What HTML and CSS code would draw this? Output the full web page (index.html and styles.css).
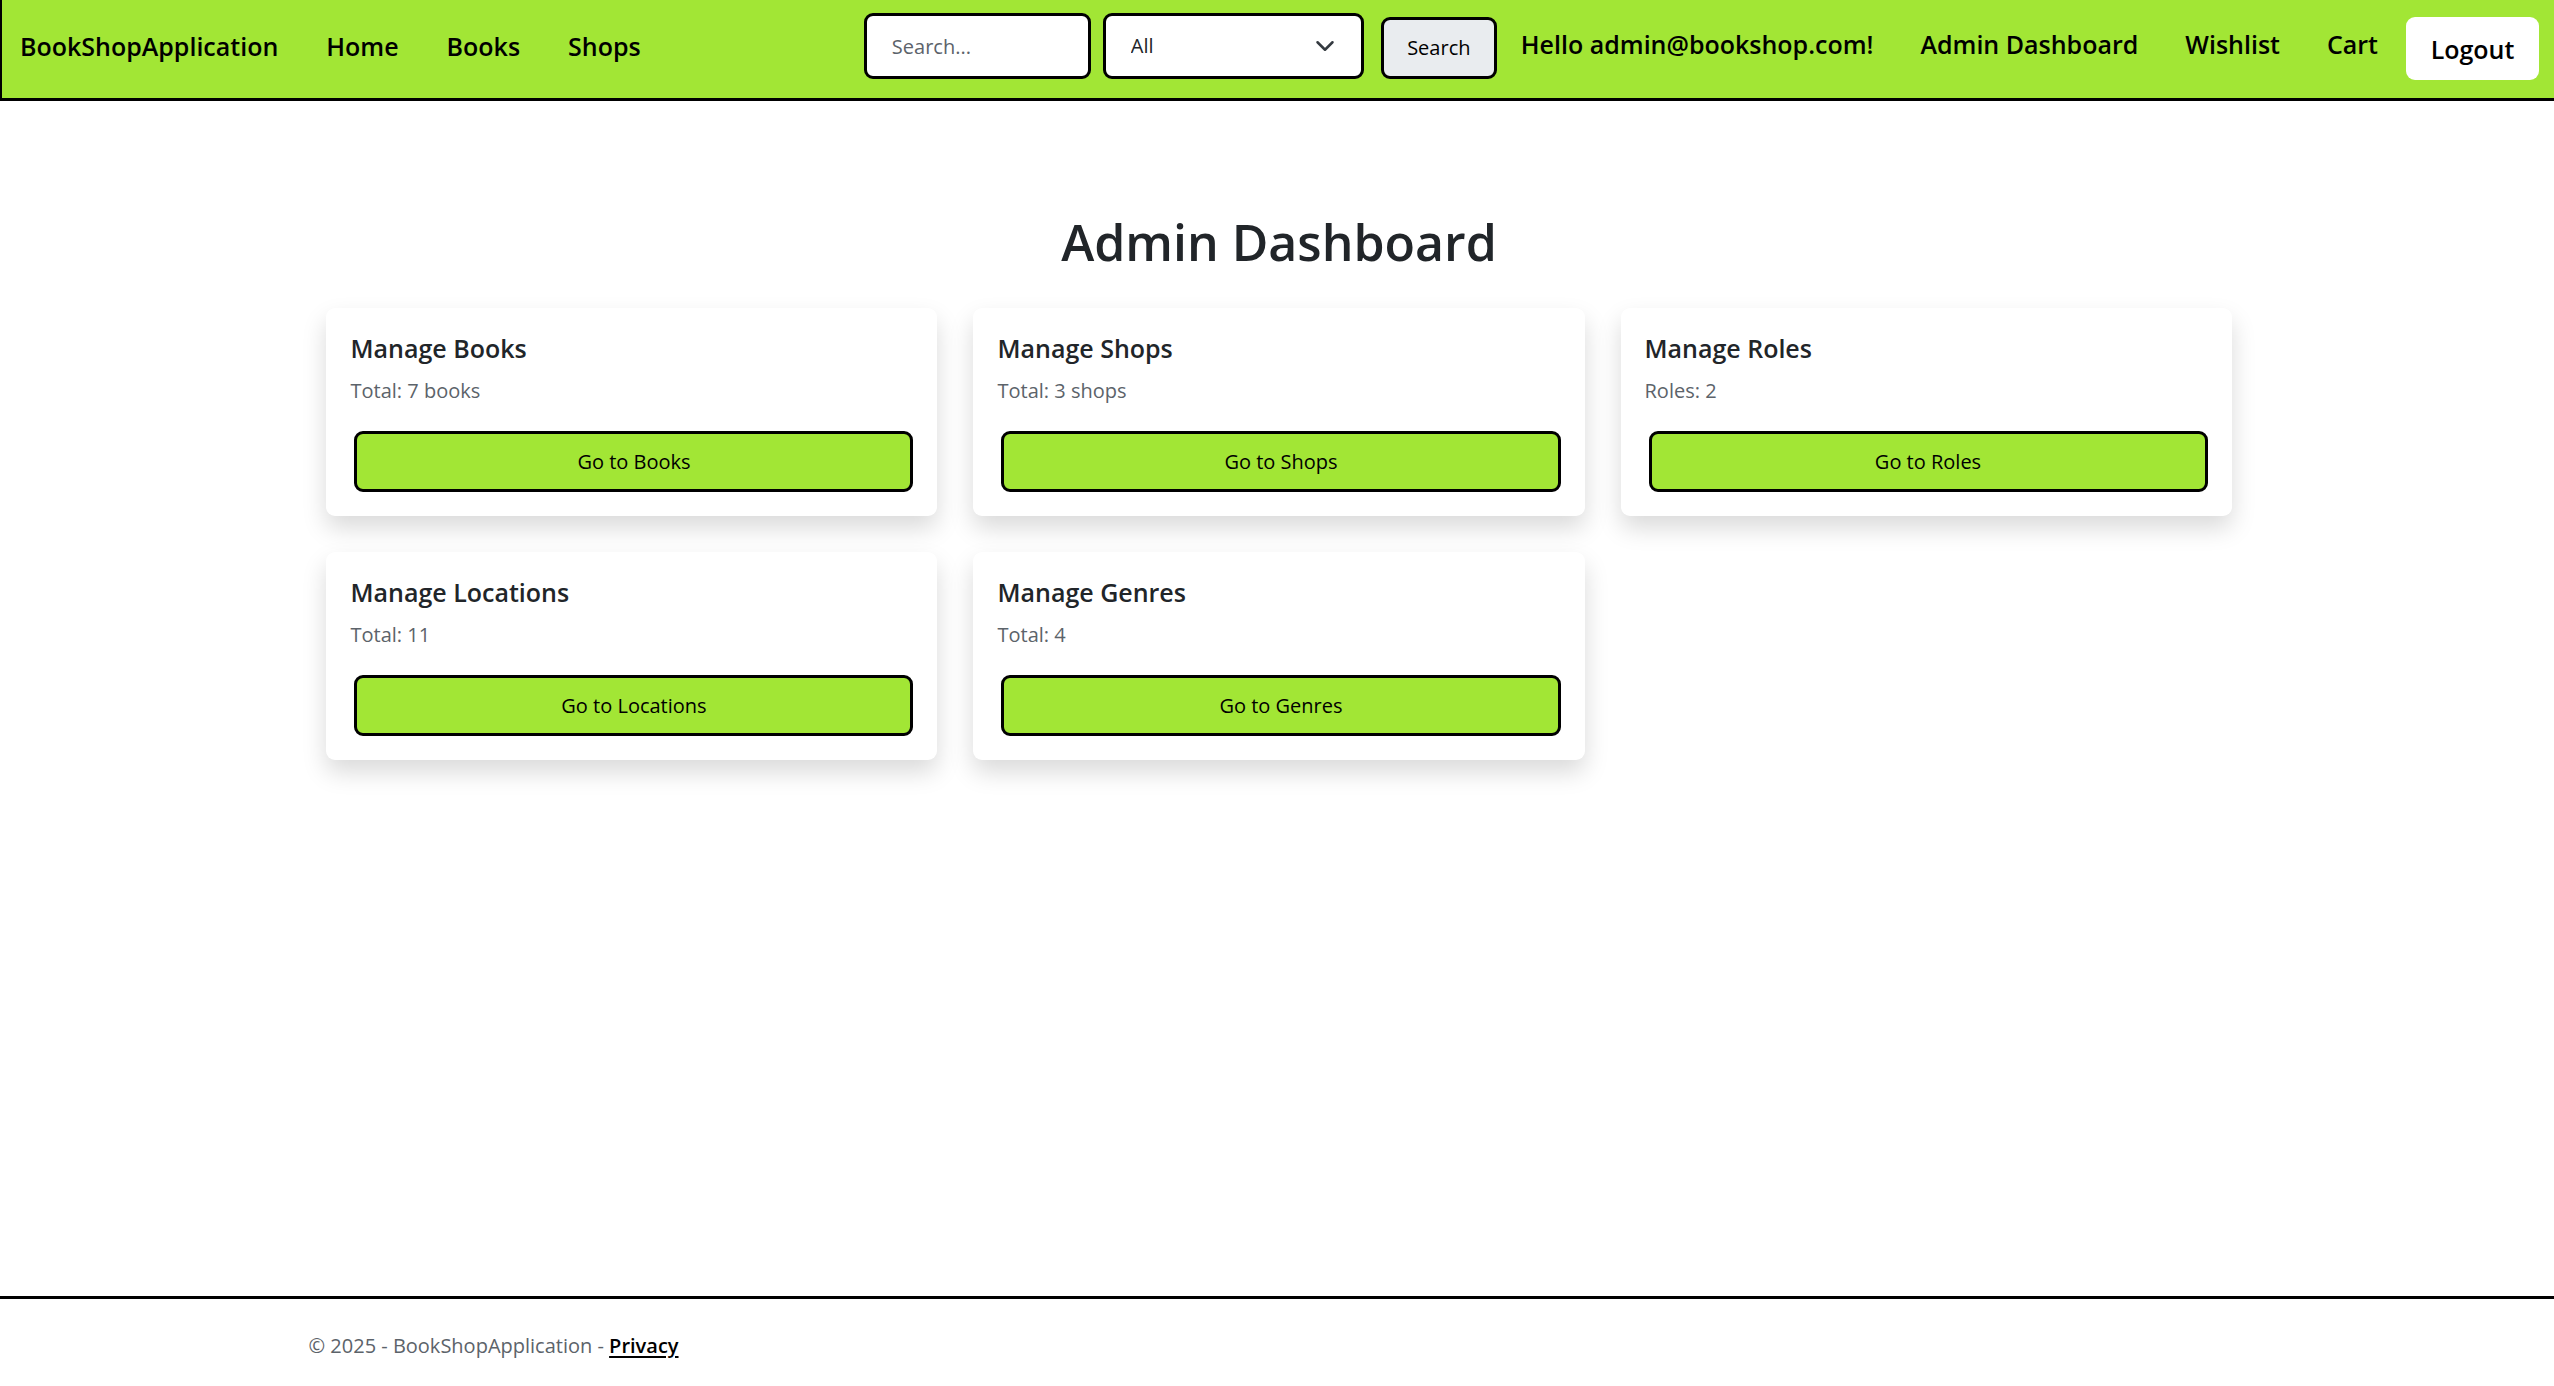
FILE: index.html
```html
<!DOCTYPE html>
<html lang="en">
<head>
<meta charset="utf-8">
<title>Admin Dashboard - BookShopApplication</title>
<link rel="stylesheet" href="styles.css">
</head>
<body>
<header class="navbar">
  <nav class="nav-main" aria-label="Main">
    <a class="nav-link" href="#">BookShopApplication</a>
    <a class="nav-link" href="#">Home</a>
    <a class="nav-link" href="#">Books</a>
    <a class="nav-link" href="#">Shops</a>
  </nav>
  <form class="search">
    <input class="field search-text" type="text" placeholder="Search..." aria-label="Search">
    <select class="field search-type" aria-label="Category"><option>All</option></select>
    <button class="btn btn-search" type="submit">Search</button>
  </form>
  <nav class="nav-user" aria-label="Account">
    <a class="nav-link" href="#">Hello admin@bookshop.com!</a>
    <a class="nav-link" href="#">Admin Dashboard</a>
    <a class="nav-link" href="#">Wishlist</a>
    <a class="nav-link" href="#">Cart</a>
  </nav>
  <button class="btn-logout" type="button">Logout</button>
</header>

<main class="container">
  <h1 class="title">Admin Dashboard</h1>
  <div class="cards">
    <section class="card">
      <h2 class="card-title">Manage Books</h2>
      <p class="card-text">Total: 7 books</p>
      <a class="btn btn-go" href="#">Go to Books</a>
    </section>
    <section class="card">
      <h2 class="card-title">Manage Shops</h2>
      <p class="card-text">Total: 3 shops</p>
      <a class="btn btn-go" href="#">Go to Shops</a>
    </section>
    <section class="card">
      <h2 class="card-title">Manage Roles</h2>
      <p class="card-text">Roles: 2</p>
      <a class="btn btn-go" href="#">Go to Roles</a>
    </section>
    <section class="card">
      <h2 class="card-title">Manage Locations</h2>
      <p class="card-text">Total: 11</p>
      <a class="btn btn-go" href="#">Go to Locations</a>
    </section>
    <section class="card">
      <h2 class="card-title">Manage Genres</h2>
      <p class="card-text">Total: 4</p>
      <a class="btn btn-go" href="#">Go to Genres</a>
    </section>
  </div>
</main>

<footer class="footer">
  <div class="container">© 2025 - BookShopApplication - <a class="privacy" href="#">Privacy</a></div>
</footer>
</body>
</html>
```
FILE: styles.css
```css
* { box-sizing: border-box; }

body {
  margin: 0;
  min-height: 100vh;
  display: flex;
  flex-direction: column;
  background: #fff;
  color: #212529;
  font-family: "Open Sans", "Noto Sans", sans-serif;
  font-size: 20px;
  line-height: 32px;
}

.navbar {
  display: flex;
  align-items: flex-start;
  padding: 13px 15px 18px 18px;
  background: #a2e635;
  border-left: 2px solid #000;
  border-bottom: 3px solid #000;
}

.nav-main,
.nav-user {
  display: flex;
}

.nav-main {
  gap: 48px;
  padding-top: 17px;
}

.nav-user {
  gap: 47px;
  padding: 15px 28px 0 24px;
}

.nav-link {
  color: #000;
  font-size: 25px;
  font-weight: 600;
  text-decoration: none;
  white-space: nowrap;
}

.search {
  display: flex;
  align-items: flex-end;
  margin-left: auto;
}

.field {
  height: 66px;
  padding: 0 25px;
  border: 3px solid #000;
  border-radius: 9px;
  background-color: #fff;
  color: #212529;
  font: inherit;
}

.field::placeholder { color: #5c636a; opacity: 1; }

.search-text { width: 227px; }

.search-type {
  width: 261px;
  margin: 0 17px 0 12px;
  appearance: none;
  background-image: url("data:image/svg+xml,%3Csvg xmlns='http://www.w3.org/2000/svg' viewBox='0 0 16 16'%3E%3Cpath fill='none' stroke='%23343a40' stroke-linecap='round' stroke-linejoin='round' stroke-width='2' d='m2 5 6 6 6-6'/%3E%3C/svg%3E");
  background-repeat: no-repeat;
  background-position: right 26px center;
  background-size: 20px;
}

.btn {
  height: 61px;
  border: 3px solid #000;
  border-radius: 9px;
  color: #000;
  font: inherit;
}

.btn-search {
  width: 116px;
  height: 62px;
  padding: 0;
  background: #e9ecef;
}

.btn-logout {
  width: 133px;
  height: 63px;
  margin-top: 4px;
  padding: 0;
  border: 0;
  border-radius: 9px;
  background: #fff;
  color: #000;
  font: inherit;
  font-size: 25px;
  font-weight: 600;
}

.container {
  width: 76%;
  margin: 0 auto;
  padding-left: 2px;
}

main.container {
  flex: 1;
  padding: 109px 16px 0 20px;
}

.title {
  margin: 0 0 34px;
  font-size: 50px;
  font-weight: 600;
  line-height: 64px;
  text-align: center;
}

.cards {
  display: grid;
  grid-template-columns: repeat(3, 1fr);
  gap: 36px;
}

.card {
  padding: 24px;
  border-radius: 9px;
  background: #fff;
  box-shadow: 0 12px 24px rgba(0, 0, 0, 0.15);
}

.card-title {
  margin: 0 0 11px;
  font-size: 25px;
  font-weight: 600;
  line-height: 32px;
}

.card-text {
  margin: 0 0 24px;
  color: #5c636a;
}

.btn-go {
  display: flex;
  align-items: center;
  justify-content: center;
  margin-left: 4px;
  background: #a2e635;
  text-decoration: none;
}

.footer {
  padding: 31px 0 24px;
  border-top: 3px solid #000;
  color: #5c636a;
}

.privacy {
  color: #000;
  font-weight: 600;
  text-decoration-thickness: 2px;
  text-underline-offset: 3px;
}
```
